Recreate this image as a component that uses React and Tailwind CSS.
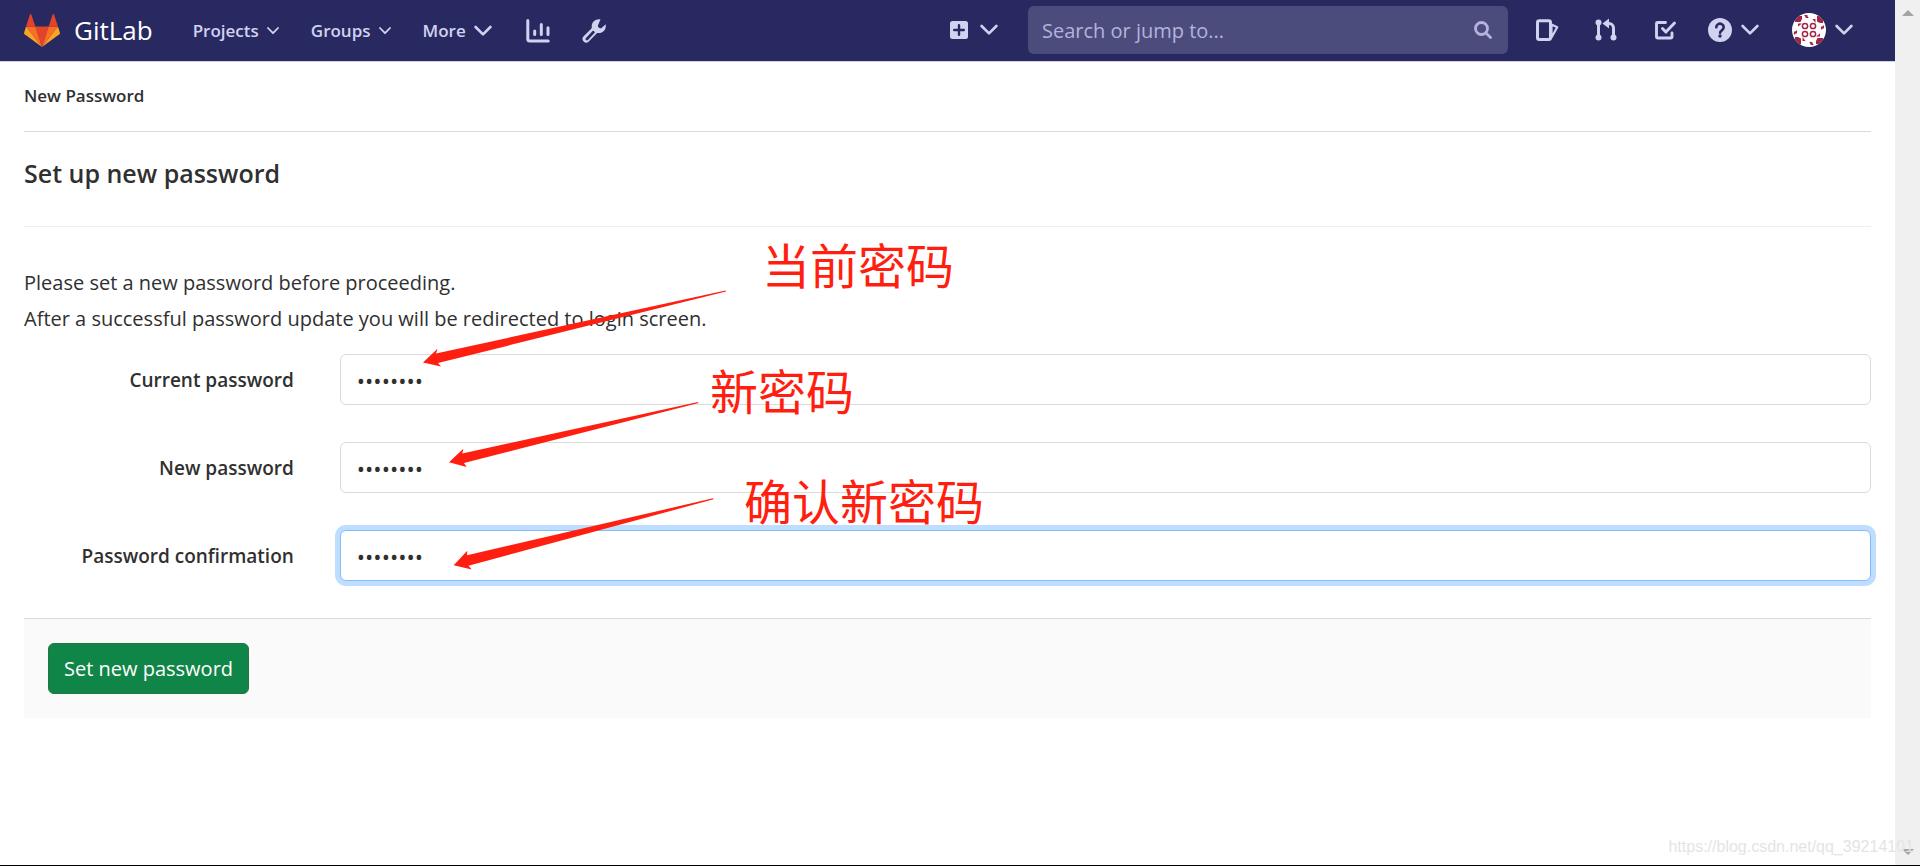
const stroke = {
  fill: 'none',
  stroke: 'currentColor',
  strokeLinecap: 'round',
  strokeLinejoin: 'round',
};

function Chevron({ small }) {
  return small ? (
    <svg viewBox="0 0 12 8" className="h-2 w-3" {...stroke} strokeWidth="1.8" aria-hidden="true">
      <path d="M1 1l5 5.2L11 1" />
    </svg>
  ) : (
    <svg viewBox="0 0 18 12" className="h-3 w-[18px]" {...stroke} strokeWidth="2.6" aria-hidden="true">
      <path d="M1.6 2l7.4 7.4L16.4 2" />
    </svg>
  );
}

function Tanuki() {
  return (
    <svg viewBox="0 0 36 33" className="h-[33px] w-9" aria-hidden="true">
      <path fill="#e24329" d="M18 33l6.6-20.4H11.4z" />
      <path fill="#fc6d26" d="M18 33l-6.6-20.4H2z" />
      <path fill="#fca326" d="M2 12.6L.1 18.8a1.4 1.4 0 0 0 .5 1.5L18 33z" />
      <path fill="#e24329" d="M2 12.6h9.4L7.3.5a.7.7 0 0 0-1.3 0z" />
      <path fill="#fc6d26" d="M18 33l6.6-20.4H34z" />
      <path fill="#fca326" d="M34 12.6l1.9 6.2a1.4 1.4 0 0 1-.5 1.5L18 33z" />
      <path fill="#e24329" d="M34 12.6h-9.4L28.700.5a.7.7 0 0 1 1.3 0z" />
    </svg>
  );
}

function ChartIcon() {
  return (
    <svg viewBox="0 0 24 24" className="size-6" {...stroke} strokeWidth="3" aria-hidden="true">
      <path d="M1.800 1.600V20a2 2 0 0 0 2 2h18.400" />
      <path d="M8.700 12v3.500M15.300 5.500v10M22 8.800v6.700" />
    </svg>
  );
}

function WrenchIcon() {
  return (
    <svg viewBox="0 0 24 24" className="size-6" fill="currentColor" fillRule="evenodd" aria-hidden="true">
      <path d="M18.500.3C13.500-.6 9.300 3 9.800 8c0 .800-.1 1.200-.6 1.700L1.400 17.600a3.700 3.700 0 0 0 5.200 5.200l8-8.300c.5-.5 1-.6 1.700-.6 4.600.4 8.200-3.500 7.400-8.700l-3.800 3.500c-1 .8-2.200.8-3.200-.1-1-.9-1.100-2.200-.3-3.200z M11.800 12.100l.7.700c.4.4.4.800 0 1.200l-6.600 7a1.300 1.300 0 0 1-1.900-1.900l6.600-7c.4-.4.8-.4 1.200 0z" />
    </svg>
  );
}

function PlusIcon() {
  return (
    <svg viewBox="0 0 18 18" className="size-[18px]" aria-hidden="true">
      <rect width="18" height="18" rx="2.500" fill="currentColor" />
      <path d="M9 4.200v9.600M4.200 9h9.600" stroke="#292961" strokeWidth="2.400" strokeLinecap="round" />
    </svg>
  );
}

function SearchIcon() {
  return (
    <svg viewBox="0 0 18 18" className="size-[18px]" {...stroke} strokeWidth="2.800" aria-hidden="true">
      <circle cx="7.500" cy="7.500" r="6" />
      <path d="M12 12l4.500 4.500" />
    </svg>
  );
}

function IssuesIcon() {
  return (
    <svg viewBox="0 0 24 24" className="size-6" {...stroke} strokeWidth="3" aria-hidden="true">
      <rect x="2.500" y="2.700" width="13" height="18.800" rx="1.800" />
      <path d="M16.500 6.500l5.700 2.800-5.700 10.200z" strokeWidth="2.200" />
    </svg>
  );
}

function MergeIcon() {
  return (
    <svg viewBox="0 0 24 24" className="size-6" fill="currentColor" aria-hidden="true">
      <circle cx="4.500" cy="4.500" r="3" />
      <circle cx="4.500" cy="19.500" r="3" />
      <circle cx="19.500" cy="19.500" r="3" />
      <path d="M4.500 4.500v15M13 5.500h2a4.500 4.500 0 0 1 4.500 4.500v9" fill="none" stroke="currentColor" strokeWidth="3" />
      <path d="M8.500 5.500l6.500-5v10z" />
    </svg>
  );
}

function TodoIcon() {
  return (
    <svg viewBox="0 0 24 24" className="size-6" {...stroke} strokeWidth="2.900" aria-hidden="true">
      <path d="M12.500 4.500H4.500a1 1 0 0 0-1 1V19a1 1 0 0 0 1 1H18a1 1 0 0 0 1-1v-4" />
      <path d="M9.500 10.500l3.400 3.600L21.500 5" />
    </svg>
  );
}

function HelpIcon() {
  return (
    <svg viewBox="0 0 24 24" className="size-6" aria-hidden="true">
      <circle cx="12" cy="12" r="12" fill="currentColor" />
      <path d="M8.300 9.300a3.700 3.500 0 1 1 5.800 2.800c-1.200.8-2 1.200-2 2.600" fill="none" stroke="#292961" strokeWidth="2.600" strokeLinecap="round" />
      <circle cx="12" cy="18" r="1.700" fill="#292961" />
    </svg>
  );
}

function Avatar() {
  return (
    <svg viewBox="0 0 34 34" className="size-[34px] rounded-full" aria-hidden="true">
      <rect width="34" height="34" fill="#fff" />
      <g fill="#a32546">
        {[0, 90, 180, 270].map((angle) => (
          <g key={angle} transform={`rotate(${angle} 17 17)`}>
            <path d="M3 3h7v3L8.500 9H3z" />
            <path d="M13.500 1.500l3.500 3.500h-3.500zM20.500 6h3v4zM2 18.500h3.500L2 22z" />
            <circle cx="13" cy="13" r="2.600" fill="none" stroke="#a32546" strokeWidth="1.500" />
          </g>
        ))}
      </g>
    </svg>
  );
}

function NavButton({ label, small }) {
  return (
    <button type="button" className="flex items-center gap-2 text-[17px] font-semibold">
      {label}
      <Chevron small={small} />
    </button>
  );
}

function Header() {
  return (
    <header className="flex h-[62px] items-center border-b border-[#d1d1f0] bg-[#292961] pb-px pl-6 pr-[42px] text-[#d1d1f0]">
      <a href="#home" className="flex items-center gap-3.5 text-[26px] text-white">
        <Tanuki />
        GitLab
      </a>
      <nav className="ml-10 flex items-center gap-8 pt-0.5" aria-label="Main">
        <NavButton label="Projects" small />
        <NavButton label="Groups" small />
        <NavButton label="More" />
        <a href="#analytics" aria-label="Analytics" className="pl-0.5"><ChartIcon /></a>
        <a href="#admin" aria-label="Admin area"><WrenchIcon /></a>
      </nav>
      <div className="ml-auto flex items-center">
        <button type="button" aria-label="New" className="flex items-center gap-3">
          <PlusIcon />
          <Chevron />
        </button>
        <label className="ml-[30px] flex h-12 w-[480px] items-center rounded-md bg-[#4c4c7c] pl-3.5 pr-4 text-[#b3b3dd]">
          <input
            type="text"
            aria-label="Search or jump to"
            placeholder="Search or jump to..."
            className="min-w-0 flex-1 bg-transparent pt-0.5 text-xl outline-none placeholder:text-[#b3b3dd]"
          />
          <SearchIcon />
        </label>
        <a href="#issues" aria-label="Issues" className="ml-[27px]"><IssuesIcon /></a>
        <a href="#merge-requests" aria-label="Merge requests" className="ml-[35px]"><MergeIcon /></a>
        <a href="#todos" aria-label="To-Do list" className="ml-[35px]"><TodoIcon /></a>
        <button type="button" aria-label="Help" className="ml-[31px] flex items-center gap-[9px]">
          <HelpIcon />
          <Chevron />
        </button>
        <button type="button" aria-label="Account" className="ml-[33px] flex items-center gap-[9px]">
          <Avatar />
          <Chevron />
        </button>
      </div>
    </header>
  );
}

function PasswordRow({ id, label, focused }) {
  return (
    <div className="-mx-6 flex items-center">
      <label htmlFor={id} className="w-1/6 pt-0.5 pr-[22px] text-right text-[19px] font-semibold whitespace-nowrap">
        {label}
      </label>
      <div className="w-5/6 px-6">
        <input
          id={id}
          type="password"
          defaultValue="password"
          className={`block h-[51px] w-full rounded-md border bg-white px-4 text-[22px] outline-none ${
            focused ? 'border-[#80bdff] ring-[5px] ring-[#bfdeff]' : 'border-[#dbdbdb]'
          }`}
        />
      </div>
    </div>
  );
}

function Annotations() {
  return (
    <div className="pointer-events-none absolute inset-0 font-['Noto_Sans_CJK_SC',sans-serif] text-5xl leading-none text-[#ff1f10]">
      <svg className="absolute top-0 left-0 h-[600px] w-[800px]" viewBox="0 0 800 600" fill="currentColor" aria-hidden="true">
        <path d="M423 362.500l14.500-13.700L436 353.500 725.500 290.500 726 291.500 438 363 441 366.500z" />
        <path d="M449 462.200l14.300-13.400L462.300 453.500 698 402 698.500 403 464 463 466.700 467z" />
        <path d="M453.700 565.200l13.600-14.400L467 555.200 713 498.300 713.500 499.300 468.500 565.800 471.700 569.500z" />
      </svg>
      <span className="absolute top-[239px] left-[762px]">当前密码</span>
      <span className="absolute top-[365px] left-[710px]">新密码</span>
      <span className="absolute top-[475px] left-[744px]">确认新密码</span>
    </div>
  );
}

function ScrollBar() {
  return (
    <div className="flex w-[25px] shrink-0 flex-col items-center justify-between bg-[#f0f0f0] pt-2.5 pb-2.5 text-[#a3a3a3]" aria-hidden="true">
      <svg viewBox="0 0 12 6" className="h-1.5 w-3" fill="currentColor"><path d="M0 6l6-6 6 6z" /></svg>
      <svg viewBox="0 0 12 6" className="h-1.5 w-3" fill="currentColor"><path d="M0 0l6 6 6-6z" /></svg>
    </div>
  );
}

export default function App() {
  return (
    <div className="relative flex min-h-screen border-b border-black bg-white font-['Open_Sans','Noto_Sans',sans-serif] text-[#303030]">
      <div className="min-w-0 flex-1">
        <Header />
        <main className="px-6">
          <nav aria-label="Breadcrumb" className="flex h-[70px] items-center border-b border-[#dbdbdb] pb-0.5 text-[17px] font-semibold">
            <a href="#new-password">New Password</a>
          </nav>
          <h1 className="flex h-[95px] items-start border-b border-[#eee] pt-[23px] text-[25px] leading-9 font-semibold">
            Set up new password
          </h1>
          <form onSubmit={(event) => event.preventDefault()}>
            <div className="pt-[38px] text-xl leading-9">
              <p>Please set a new password before proceeding.</p>
              <p>After a successful password update you will be redirected to login screen.</p>
            </div>
            <div className="mt-[17px] flex flex-col gap-[37px]">
              <PasswordRow id="current-password" label="Current password" />
              <PasswordRow id="new-password" label="New password" />
              <PasswordRow id="password-confirmation" label="Password confirmation" focused />
            </div>
            <div className="mt-[37px] border-t border-[#dbdbdb] bg-[#fafafa] p-6">
              <button type="submit" className="h-[51px] rounded-md border border-[#217645] bg-[#108548] px-[15px] text-xl text-white">
                Set new password
              </button>
            </div>
          </form>
        </main>
      </div>
      <ScrollBar />
      <Annotations />
      <span className="absolute right-1.5 bottom-1.5 font-['Liberation_Sans',sans-serif] text-base text-[#e4e4e4]">
        https://blog.csdn.net/qq_39214101
      </span>
    </div>
  );
}
